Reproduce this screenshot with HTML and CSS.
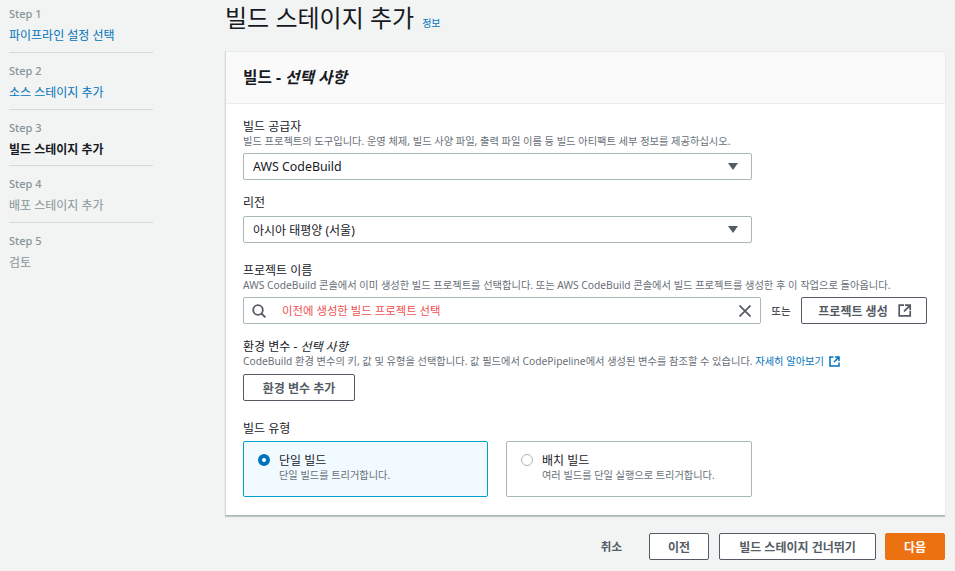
FILE: index.html
```html
<!DOCTYPE html>
<html lang="ko">
<head>
<meta charset="utf-8">
<title>빌드 스테이지 추가</title>
<link rel="stylesheet" href="styles.css">
</head>
<body>
<div class="page">
  <nav class="steps">
    <div class="step"><div class="step-no">Step 1</div><a class="step-title link">파이프라인 설정 선택</a></div>
    <div class="step"><div class="step-no">Step 2</div><a class="step-title link">소스 스테이지 추가</a></div>
    <div class="step"><div class="step-no">Step 3</div><div class="step-title current">빌드 스테이지 추가</div></div>
    <div class="step"><div class="step-no">Step 4</div><div class="step-title muted">배포 스테이지 추가</div></div>
    <div class="step last"><div class="step-no">Step 5</div><div class="step-title muted">검토</div></div>
  </nav>
  <main class="main">
    <header class="page-head">
      <h1>빌드 스테이지 추가</h1>
      <a class="info link">정보</a>
    </header>
    <section class="card">
      <div class="card-head"><h2>빌드 - <em>선택 사항</em></h2></div>
      <div class="card-body">
        <div class="field f-provider">
          <div class="label">빌드 공급자</div>
          <div class="desc">빌드 프로젝트의 도구입니다. 운영 체제, 빌드 사양 파일, 출력 파일 이름 등 빌드 아티팩트 세부 정보를 제공하십시오.</div>
          <div class="select"><span class="latin">AWS CodeBuild</span><svg class="caret" width="10" height="7" viewBox="0 0 10 7"><path d="M0 0h10L5 7z" fill="#545b64"/></svg></div>
        </div>
        <div class="field f-region">
          <div class="label">리전</div>
          <div class="select"><span>아시아 태평양 (서울)</span><svg class="caret" width="10" height="7" viewBox="0 0 10 7"><path d="M0 0h10L5 7z" fill="#545b64"/></svg></div>
        </div>
        <div class="field f-project">
          <div class="label">프로젝트 이름</div>
          <div class="desc">AWS CodeBuild 콘솔에서 이미 생성한 빌드 프로젝트를 선택합니다. 또는 AWS CodeBuild 콘솔에서 빌드 프로젝트를 생성한 후 이 작업으로 돌아옵니다.</div>
          <div class="project-row">
            <div class="search">
              <svg class="search-icon" width="14" height="14" viewBox="0 0 14 14" fill="none" stroke="#545b64" stroke-width="1.8"><circle cx="6" cy="6" r="4.8"/><path d="M9.5 9.5L13.4 13.4"/></svg>
              <span class="placeholder">이전에 생성한 빌드 프로젝트 선택</span>
              <svg class="clear-icon" width="12" height="12" viewBox="0 0 12 12" fill="none" stroke="#545b64" stroke-width="1.7"><path d="M.5.5l11 11M11.5.5l-11 11"/></svg>
            </div>
            <span class="or">또는</span>
            <button class="btn btn-create">프로젝트 생성
              <svg width="14" height="13" viewBox="0 0 14 13" fill="none" stroke="#545b64" stroke-width="1.7"><path d="M6 1.2H1.2v10.6h11V7M7 1.2h5.2v5M12 1.4L6 7.4"/></svg>
            </button>
          </div>
        </div>
        <div class="field f-env">
          <div class="label">환경 변수 - <em>선택 사항</em></div>
          <div class="desc">CodeBuild 환경 변수의 키, 값 및 유형을 선택합니다. 값 필드에서 CodePipeline에서 생성된 변수를 참조할 수 있습니다. <a class="link">자세히 알아보기</a>
            <svg class="ext" width="11" height="11" viewBox="0 0 11 11" fill="none" stroke="#0073bb" stroke-width="1.5"><path d="M4.5 1H1v9h9V6.5M6 1h4v4M10 1L5 6"/></svg>
          </div>
          <button class="btn btn-env">환경 변수 추가</button>
        </div>
        <div class="field f-type">
          <div class="label">빌드 유형</div>
          <div class="tiles">
            <div class="tile selected">
              <span class="radio on"></span>
              <div><div class="tile-title">단일 빌드</div><div class="tile-desc">단일 빌드를 트리거합니다.</div></div>
            </div>
            <div class="tile">
              <span class="radio"></span>
              <div><div class="tile-title">배치 빌드</div><div class="tile-desc">여러 빌드를 단일 실행으로 트리거합니다.</div></div>
            </div>
          </div>
        </div>
      </div>
    </section>
    <footer class="actions">
      <a class="cancel">취소</a>
      <button class="btn btn-prev">이전</button>
      <button class="btn btn-skip">빌드 스테이지 건너뛰기</button>
      <button class="btn btn-next">다음</button>
    </footer>
  </main>
</div>
</body>
</html>
```
FILE: styles.css
```css
* { box-sizing: border-box; }
html, body { margin: 0; height: 100%; overflow: hidden; }
body {
  background: #f2f3f3;
  color: #16191f;
  font-family: "Noto Sans", "Noto Sans CJK KR", sans-serif;
  font-size: 12px;
}
.page { display: flex; height: 571px; padding: 0 10px 0 9px; }
.steps { width: 144px; flex: none; margin-right: 72px; padding-top: 5px; }
.step { height: 47.75px; border-bottom: 1px solid #d5dbdb; padding-top: 1px; margin-bottom: 9px; }
.step.last { border-bottom: 0; }
.step-no { font-size: 11px; line-height: 16px; color: #879596; font-weight: 500; }
.step-title { display: block; font-size: 12px; line-height: 18px; margin-top: 5px; }
.link { color: #0073bb; }
.current { color: #16191f; font-weight: 700; }
.muted { color: #879596; }
.main { flex: 1; min-width: 0; display: flex; flex-direction: column; }
.page-head { display: flex; align-items: flex-end; height: 51px; padding: 0 0 15px 0; }
h1 { margin: 0; font-size: 24px; font-weight: 400; line-height: 36px; }
.info { font-size: 10px; line-height: 16px; margin: 0 0 5px 8px; }
.card {
  height: 465px;
  background: #fff;
  border-left: 1px solid #d5dbdb;
  border-bottom: 1px solid #aab7b8;
  border-top: 1px solid #eaeded;
  box-shadow: 0 1px 1px rgba(0, 28, 36, .2);
}
.card-head { height: 52px; background: #fafafa; border-bottom: 1px solid #eaeded; padding: 0 17px 2px; display: flex; align-items: center; }
h2 { margin: 0; font-size: 15.7px; font-weight: 700; line-height: 20px; }
.card-body { padding: 0 17px; }
.label { font-size: 12px; line-height: 14px; color: #16191f; }
.desc { font-size: 10.25px; line-height: 14px; color: #687078; white-space: nowrap; }
.select {
  width: 509px; height: 27px; margin-top: 5px;
  border: 1px solid #aab7b8; border-radius: 2px; background: #fff;
  display: flex; align-items: center; justify-content: space-between;
  padding: 0 13px 0 9px; font-size: 12px; color: #16191f;
}
.latin { font-size: 12.4px; }
.f-provider { padding-top: 16px; }
.f-region { padding-top: 16px; }
.f-region .select { margin-top: 6px; }
.f-project { padding-top: 21px; }
.project-row { display: flex; align-items: center; margin-top: 5px; }
.search {
  width: 518px; height: 27px; border: 1px solid #aab7b8; border-radius: 2px; background: #fff;
  display: flex; align-items: center; padding: 0 9px 0 8px;
}
.placeholder { color: #f04f4f; font-size: 11.4px; margin-left: 16px; flex: 1; line-height: 16px; }
.or { width: 40px; text-align: center; font-size: 10.5px; color: #16191f; }
.btn {
  font-family: inherit; background: #fff; border: 1px solid #545b64; border-radius: 2px;
  color: #545b64; font-weight: 700; font-size: 12px; height: 27px; padding: 0;
  display: inline-flex; align-items: center; justify-content: center;
}
.btn-create { width: 126px; gap: 10px; padding-left: 2px; color: #545b64; }
.f-env { padding-top: 16px; }
.f-env .label em { font-style: italic; }
.ext { vertical-align: -2px; margin-left: 2px; }
.btn-env { width: 112px; margin-top: 6px; }
.f-type { padding-top: 21px; }
.tiles { display: grid; grid-template-columns: 245px 246px; gap: 18px; margin-top: 5px; }
.tile {
  height: 56px; border: 1px solid #aab7b8; border-radius: 2px; background: #fff;
  display: flex; align-items: flex-start; padding: 11px 14px; gap: 9px;
}
.tile.selected { background: #f1faff; border-color: #00a1c9; }
.radio { width: 12px; height: 12px; margin-top: 1px; flex: none; border-radius: 50%; border: 1px solid #aab7b8; background: #fff; }
.radio.on { border: 4px solid #0073bb; }
.tile-title { font-size: 12px; line-height: 15px; color: #16191f; }
.tile-desc { font-size: 10.2px; line-height: 14px; color: #687078; }
.actions { display: flex; align-items: center; justify-content: flex-end; padding-top: 17px; }
.cancel { font-weight: 700; font-size: 11.5px; color: #545b64; margin-right: 27px; padding-bottom: 2px; }
.btn-prev { width: 60px; margin-right: 10px; }
.btn-skip { width: 157px; margin-right: 9px; }
.btn-next { width: 60px; background: #ec7211; border-color: #ec7211; color: #fff; }
```
